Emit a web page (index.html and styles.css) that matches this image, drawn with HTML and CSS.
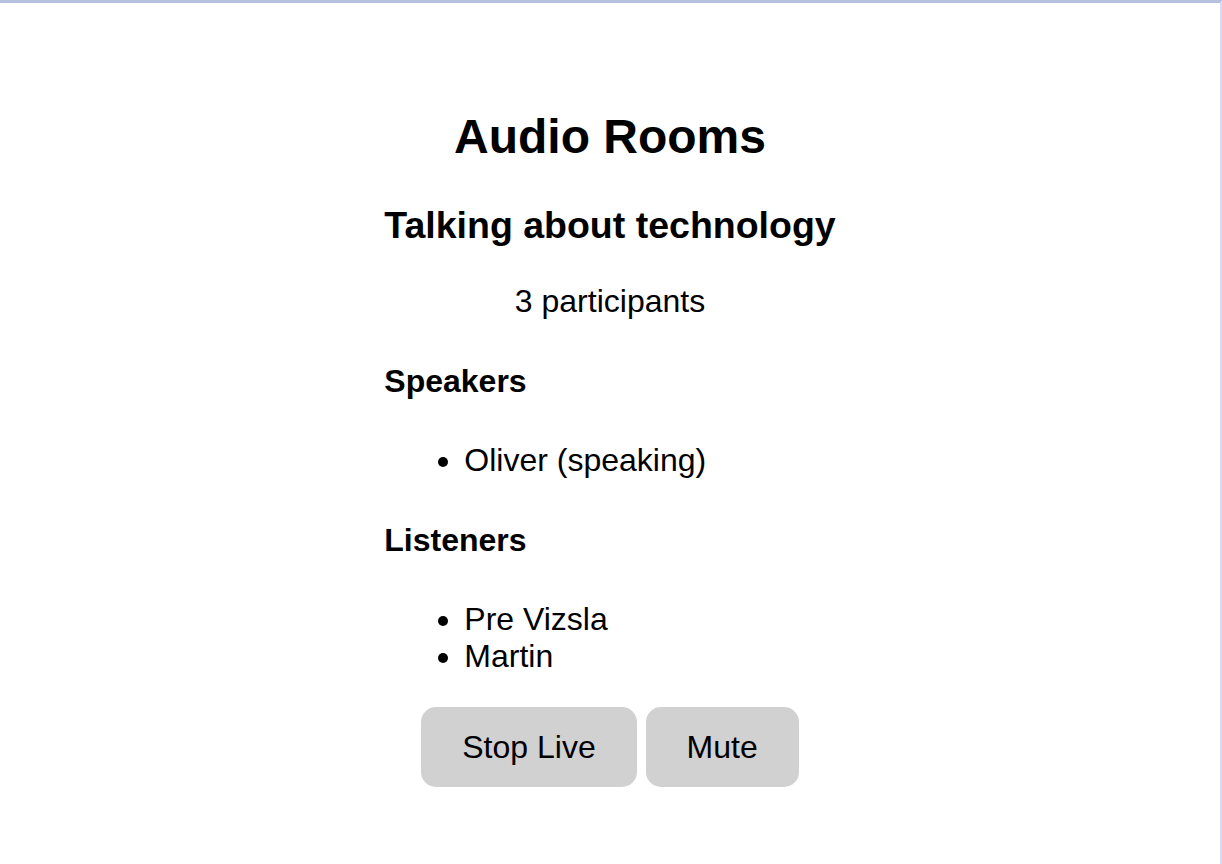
FILE: index.html
```html
<!DOCTYPE html>
<html lang="en">
<head>
<meta charset="utf-8">
<title>Audio Rooms</title>
<link rel="stylesheet" href="styles.css">
</head>
<body>
<div class="page">
  <div class="room">
    <h1 class="title">Audio Rooms</h1>
    <h2 class="room-name">Talking about technology</h2>
    <p class="count">3 participants</p>
    <h3 class="section">Speakers</h3>
    <ul class="people">
      <li>Oliver (speaking)</li>
    </ul>
    <h3 class="section">Listeners</h3>
    <ul class="people last">
      <li>Pre Vizsla</li>
      <li>Martin</li>
    </ul>
    <div class="actions">
      <button class="btn">Stop Live</button> <button class="btn">Mute</button>
    </div>
  </div>
</div>
</body>
</html>
```
FILE: styles.css
```css
html, body {
  margin: 0;
  padding: 0;
}
body {
  box-sizing: border-box;
  min-height: 100vh;
  background: #ffffff;
  border-top: 3px solid #b6c1de;
  border-right: 2px solid #d3ddf9;
  font-family: "Liberation Sans", Arial, Helvetica, sans-serif;
  color: #000;
}
.page {
  display: flex;
  justify-content: center;
  padding-top: 106px;
}
.room {
  display: flex;
  flex-direction: column;
}
.title {
  margin: 0 0 40px;
  font-size: 48px;
  line-height: 55px;
  font-weight: bold;
  text-align: center;
}
.room-name {
  margin: 0 0 36px;
  font-size: 37.5px;
  line-height: 43px;
  font-weight: bold;
}
.count {
  margin: 0 0 43px;
  font-size: 32px;
  line-height: 37px;
  text-align: center;
}
.section {
  margin: 0 0 42px;
  font-size: 32px;
  line-height: 37px;
  font-weight: bold;
}
.people {
  margin: 0 0 43px;
  padding-left: 80px;
  font-size: 32px;
  line-height: 37px;
}
.people.last {
  margin-bottom: 32px;
}
.actions {
  text-align: center;
  font-size: 32px;
}
.btn {
  font-family: "Liberation Sans", Arial, Helvetica, sans-serif;
  font-size: 32px;
  line-height: 38px;
  padding: 21px 41px;
  border: none;
  border-radius: 15px;
  background: #d1d1d1;
  color: #000;
}
```
